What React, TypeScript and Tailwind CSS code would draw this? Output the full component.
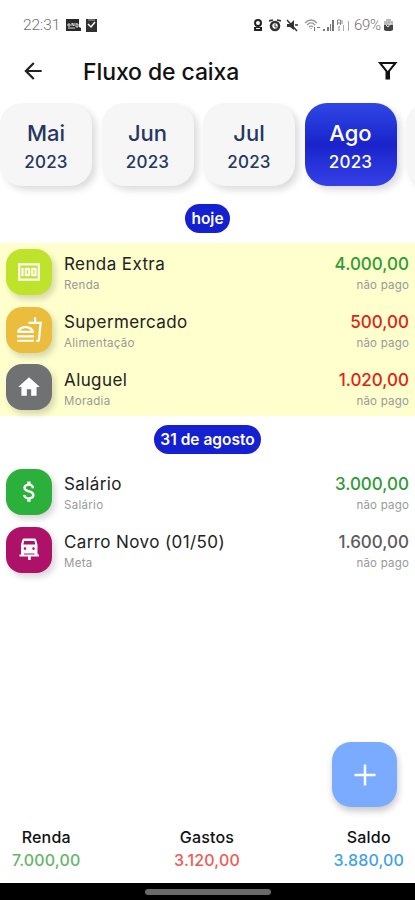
import type { ReactNode } from "react";
import {
  MdArrowBack,
  MdAttachMoney,
  MdHome,
  MdMoney,
  MdOutlineFastfood,
} from "react-icons/md";

type Month = { name: string; year: string; active?: boolean };

type Entry = {
  title: string;
  category: string;
  value: string;
  valueClass: string;
  iconClass: string;
  icon: ReactNode;
};

const months: Month[] = [
  { name: "Mai", year: "2023" },
  { name: "Jun", year: "2023" },
  { name: "Jul", year: "2023" },
  { name: "Ago", year: "2023", active: true },
  { name: "", year: "" },
];

const today: Entry[] = [
  {
    title: "Renda Extra",
    category: "Renda",
    value: "4.000,00",
    valueClass: "text-[#2f9a35]",
    iconClass: "bg-[#bfe32a]",
    icon: <MdMoney size={26} />,
  },
  {
    title: "Supermercado",
    category: "Alimentação",
    value: "500,00",
    valueClass: "text-[#dc2419]",
    iconClass: "bg-[#ebbd3d]",
    icon: <MdOutlineFastfood size={27} />,
  },
  {
    title: "Aluguel",
    category: "Moradia",
    value: "1.020,00",
    valueClass: "text-[#dc2419]",
    iconClass: "bg-[#707173]",
    icon: <MdHome size={26} />,
  },
];

const endOfMonth: Entry[] = [
  {
    title: "Salário",
    category: "Salário",
    value: "3.000,00",
    valueClass: "text-[#2f9a35]",
    iconClass: "bg-[#2bb03b]",
    icon: <MdAttachMoney size={27} />,
  },
  {
    title: "Carro Novo (01/50)",
    category: "Meta",
    value: "1.600,00",
    valueClass: "text-[#5c5c5c]",
    iconClass: "bg-[#ae1268]",
    icon: <CarIcon />,
  },
];

const totals = [
  { label: "Renda", value: "7.000,00", className: "text-[#66b46a]" },
  { label: "Gastos", value: "3.120,00", className: "text-[#ee5a54]" },
  { label: "Saldo", value: "3.880,00", className: "text-[#3f9fe8]" },
];

// car front standing on a signpost
function CarIcon() {
  return (
    <svg width="27" height="27" viewBox="0 0 27 27" fill="currentColor">
      <path
        fillRule="evenodd"
        d="M8 2.500h10.500q1.200 0 1.500 1l1.500 5v9H5V8.500l1.500-5q.3-1 1.500-1zM8.200 5l-.9 3.500h12L18.400 5zM9 11.300a1.300 1.300 0 1 0 0 2.600a1.300 1.300 0 1 0 0-2.600zM17.500 11.300a1.300 1.300 0 1 0 0 2.600a1.300 1.300 0 1 0 0-2.600z"
      />
      <path d="M3.500 18.500h19.500v1.900h-8.300v3.600h-2.600v-3.600H3.500z" />
      <path d="M5 17h3v2H5zM18.500 17h3v2h-3z" />
    </svg>
  );
}

function StatusBar() {
  return (
    <div className="h-[42px] pt-[17px] pl-[23px] pr-[22px] flex justify-between text-[#6f6f6f]">
      <div className="flex h-[17px] items-center">
        <span className="w-[37px] text-[15.500px] tracking-[-0.1px] font-light font-[Roboto,sans-serif]">
          22:31
        </span>
        <svg className="ml-[5px]" width="16" height="13" viewBox="0 0 16 13">
          <path fill="#292929" d="M1 0h13v8l2 1v3H1z" />
          <path
            stroke="#ddd"
            fill="none"
            d="M3 7V5h2v2H3m4 0V4l2 3V4m2 0v4h2V5h-2M3 9h7"
          />
        </svg>
        <svg className="ml-[5px]" width="11" height="13" viewBox="0 0 11 13">
          <path fill="#303030" d="M0 0h11v13H0z" />
          <path stroke="#fff" strokeWidth="1.500" fill="none" d="M2 5l3 3 4-5" />
          <path stroke="#aaa" d="M2 1h7" />
        </svg>
      </div>
      <div className="flex h-[17px] items-center">
        <svg width="10" height="13" viewBox="0 0 10 13">
          <circle cx="5" cy="4" r="3" fill="none" stroke="#222" strokeWidth="2" />
          <path fill="#222" d="M1 8h8v4H1z" />
          <path stroke="#eee" d="M3 9.500h4" />
        </svg>
        <svg className="ml-[6px]" width="12" height="13" viewBox="0 0 12 13">
          <path stroke="#333" strokeWidth="1.800" d="M0 2l4-1M8 1l4 1" />
          <circle cx="6" cy="7" r="4" fill="none" stroke="#333" strokeWidth="2.600" />
          <path stroke="#333" fill="none" d="M6 5v3h2" />
        </svg>
        <svg className="ml-[5px]" width="12" height="13" viewBox="0 0 12 13">
          <path fill="#333" d="M1 5h3l4-4v10L4 8H1z" />
          <path stroke="#333" strokeWidth="1.500" d="M1 1l10 11M9 6h3" />
        </svg>
        <svg className="ml-[6px]" width="17" height="13" viewBox="0 0 17 13">
          <path
            fill="none"
            stroke="#999"
            strokeWidth="1.300"
            d="M1 4c4-4 8-4 12 0M3 6c3-3 5-3 8 0M5 8c1-1 3-1 4 0"
          />
          <path fill="#777" d="M7 10l-1-1h2zM10 8h1v4h-1zM13 8h3v1h-3z" />
        </svg>
        <svg className="ml-[2px]" width="28" height="13" viewBox="0 0 28 13">
          <path fill="#777" d="M0 10h2v2H0zM4 8h2v4H4zM7 5h1v7H7zM9 1h2v11H9z" />
          <path fill="#aaa" d="M25 2h1v10h-1zM20 6h1v6h-1z" />
          <path stroke="#888" fill="none" d="M14.500 6V1h3v5M14.500 4h3M16 7v5M19 1v4" />
        </svg>
        <span className="ml-[3px] w-[28px] text-[15px] tracking-[-0.3px] font-light font-[Roboto,sans-serif]">
          69%
        </span>
        <svg className="ml-[2px]" width="9" height="13" viewBox="0 0 9 13">
          <path fill="#bbb" d="M2 0h5v2h2v4H0V2h2z" />
          <path fill="#444" d="M0 6h9v5l-2 1H2l-2-1z" />
          <path stroke="#eee" d="M2 6l2 2 3-4" fill="none" />
        </svg>
      </div>
    </div>
  );
}

function MonthCard({ month }: { month: Month }) {
  return (
    <div
      className={`w-[92px] h-[83px] shrink-0 rounded-[22px] flex flex-col items-center pt-[16px] shadow-[4px_4px_7px_rgba(0,0,0,0.14)] ${
        month.active
          ? "bg-linear-to-b from-[#3046e4] via-[#1a22cc] to-[#3541e6] text-white font-medium"
          : "bg-[#f6f6f6] text-[#25375f]"
      }`}
    >
      <span
        className={`text-[22px] leading-[28px] ${
          month.active ? "" : "font-[450]"
        }`}
      >
        {month.name}
      </span>
      <span className="text-[17px] leading-[31px] tracking-[0.200px] font-medium">
        {month.year}
      </span>
    </div>
  );
}

function DateChip({ children }: { children: ReactNode }) {
  return (
    <div className="flex justify-center">
      <span className="h-[29px] px-[6px] rounded-full bg-[#1420d2] text-white text-[15.500px] leading-[30px] font-semibold">
        {children}
      </span>
    </div>
  );
}

function EntryRow({ entry }: { entry: Entry }) {
  return (
    <div className="h-[57.700px] pl-[6px] pr-[6px] flex items-center">
      <div
        className={`w-[46px] h-[46px] rounded-[16px] flex items-center justify-center text-white shadow-[3px_4px_6px_rgba(0,0,0,0.16)] ${entry.iconClass}`}
      >
        {entry.icon}
      </div>
      <div className="ml-[12px] pt-[5px] flex-1">
        <p className="text-[17px] leading-[22px] tracking-[0.400px] text-[#222]">
          {entry.title}
        </p>
        <p className="text-[11.500px] leading-[20px] tracking-[0.300px] text-[#999]">
          {entry.category}
        </p>
      </div>
      <div className="pt-[5px] text-right">
        <p
          className={`text-[17px] leading-[22px] font-medium ${entry.valueClass}`}
        >
          {entry.value}
        </p>
        <p className="text-[11.500px] leading-[20px] tracking-[0.200px] text-[#999]">
          não pago
        </p>
      </div>
    </div>
  );
}

export default function App() {
  return (
    <div className="w-[415px] h-[900px] overflow-hidden bg-white font-[Inter,sans-serif] flex flex-col relative">
      <StatusBar />
      <header className="h-[61px] pb-[3px] pl-[20px] pr-[16px] flex items-center">
        <MdArrowBack size={26} className="text-[#222]" />
        <h1 className="ml-[37px] pt-[2px] flex-1 text-[23px] tracking-[-0.1px] font-medium text-[#111]">
          Fluxo de caixa
        </h1>
        <svg width="22" height="22" viewBox="0 0 22 22" fill="none">
          <path d="M3 3h15.500L12 11v7.500H9.500V11z" stroke="#111" strokeWidth="2" />
          <path d="M9 11h3.500v8H9z" fill="#111" />
        </svg>
      </header>
      <div className="h-[101px] flex gap-[9.500px] overflow-hidden shrink-0">
        {months.map((month, i) => (
          <MonthCard key={i} month={month} />
        ))}
      </div>
      <DateChip>hoje</DateChip>
      <section className="mt-[10px] bg-[#feffcc]">
        {today.map((entry) => (
          <EntryRow key={entry.title} entry={entry} />
        ))}
      </section>
      <div className="mt-[9px]">
        <DateChip>31 de agosto</DateChip>
      </div>
      <section className="mt-[9px] flex-1">
        {endOfMonth.map((entry) => (
          <EntryRow key={entry.title} entry={entry} />
        ))}
      </section>
      <footer className="h-[57px] flex justify-between pl-[12px] pr-[11px] text-center">
        {totals.map((total) => (
          <div key={total.label}>
            <p className="text-[16px] leading-[22px] font-medium tracking-[0.200px] text-[#111]">
              {total.label}
            </p>
            <p
              className={`text-[16px] leading-[24px] font-medium tracking-[0.150px] ${total.className}`}
            >
              {total.value}
            </p>
          </div>
        ))}
      </footer>
      <div className="h-[17px] bg-black flex justify-center pt-[6px]">
        <div className="w-[126px] h-[6px] rounded-full bg-[#6a6a6a]" />
      </div>
      <button className="absolute right-[18px] bottom-[93px] w-[65px] h-[65px] rounded-[19px] bg-[#7aabfe] shadow-[1px_4px_7px_rgba(0,0,0,0.22)] flex items-center justify-center">
        <svg width="22" height="22" viewBox="0 0 22 22" stroke="#fff" strokeWidth="2.500">
          <path d="M11 0.500v21M0.500 11h21" />
        </svg>
      </button>
    </div>
  );
}
